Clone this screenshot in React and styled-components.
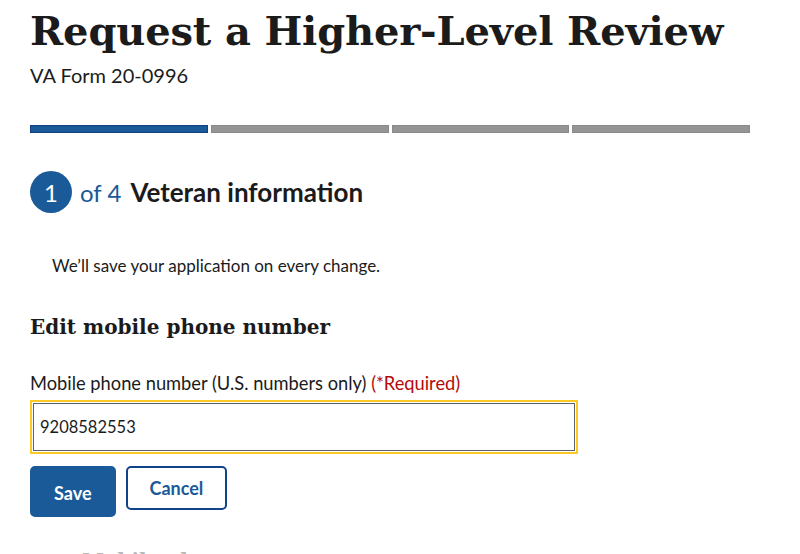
import React from "react";
import styled, { createGlobalStyle } from "styled-components";

const GlobalStyle = createGlobalStyle`
  body {
    margin: 0;
    background: #ffffff;
    font-family: "Lato", "Noto Sans", sans-serif;
    color: #1b1b1b;
  }
`;

const Page = styled.div`
  width: 720px;
  padding: 0 30px;
  height: 554px;
  overflow: hidden;
`;

const Title = styled.h1`
  margin: 0;
  padding-top: 6px;
  font-family: "DejaVu Serif", serif;
  font-weight: 700;
  font-size: 40px;
  line-height: 50px;
  letter-spacing: -0.15px;
  color: #1b1b1b;
`;

const Subtitle = styled.div`
  margin-top: 6px;
  font-size: 20px;
  line-height: 26px;
`;

const Progress = styled.div`
  display: grid;
  grid-template-columns: repeat(4, 1fr);
  gap: 3px;
  margin-top: 37px;
`;

const Segment = styled.div`
  height: 8px;
  box-sizing: border-box;
  background: ${props => (props.active ? "#1a5a98" : "#949494")};
  border: 1px solid ${props => (props.active ? "#12407c" : "#8a8a8a")};
`;

const StepRow = styled.div`
  display: flex;
  align-items: center;
  margin-top: 38px;
  gap: 8px;
`;

const StepCircle = styled.div`
  width: 42px;
  height: 42px;
  border-radius: 50%;
  background: #1a5a98;
  color: #ffffff;
  display: flex;
  align-items: center;
  justify-content: center;
  font-size: 24px;
`;

const StepOf = styled.span`
  font-size: 24px;
  color: #1a5a98;
`;

const StepTitle = styled.span`
  font-size: 26px;
  font-weight: 700;
  margin-left: 1px;
`;

const SaveNote = styled.p`
  margin: 42px 0 0 22px;
  font-size: 17px;
  line-height: 22px;
`;

const SectionHeading = styled.h3`
  margin: 36px 0 0;
  font-family: "DejaVu Serif", serif;
  font-weight: 700;
  font-size: 20px;
  line-height: 28px;
`;

const Label = styled.label`
  display: block;
  margin-top: 30px;
  font-size: 18.3px;
  line-height: 24px;
`;

const Required = styled.span`
  color: #b50909;
`;

const FocusRing = styled.div`
  margin-top: 5px;
  width: 548px;
  box-sizing: border-box;
  border: 2px solid #fac922;
  padding: 1px;
`;

const Input = styled.input`
  display: block;
  width: 100%;
  height: 48px;
  box-sizing: border-box;
  border: 1px solid #5b616b;
  padding: 0 6px;
  font-family: "Lato", "Noto Sans", sans-serif;
  font-size: 16.5px;
  color: #1b1b1b;
  outline: none;
`;

const Buttons = styled.div`
  display: flex;
  align-items: flex-start;
  gap: 10px;
  margin-top: 12px;
`;

const Button = styled.button`
  box-sizing: border-box;
  height: ${props => (props.primary ? "51px" : "44px")};
  padding: ${props => (props.primary ? "2px 22px 0" : "0 22px")};
  border-radius: 5px;
  font-family: "Lato", "Noto Sans", sans-serif;
  font-weight: 700;
  font-size: 18px;
  background: ${props => (props.primary ? "#1a5a98" : "#ffffff")};
  color: ${props => (props.primary ? "#ffffff" : "#1a5a98")};
  border: 2px solid ${props => (props.primary ? "#1a5a98" : "#11438a")};
`;

const NextHeading = styled.div`
  margin: 32px 0 0 52px;
  font-family: "DejaVu Serif", serif;
  font-weight: 700;
  font-size: 20px;
  color: #b8b8b8;
`;

export default function App() {
  return (
    <Page>
      <GlobalStyle />
      <Title>Request a Higher-Level Review</Title>
      <Subtitle>VA Form 20-0996</Subtitle>
      <Progress>
        <Segment active />
        <Segment />
        <Segment />
        <Segment />
      </Progress>
      <StepRow>
        <StepCircle>1</StepCircle>
        <StepOf>of 4</StepOf>
        <StepTitle>Veteran information</StepTitle>
      </StepRow>
      <SaveNote>We’ll save your application on every change.</SaveNote>
      <SectionHeading>Edit mobile phone number</SectionHeading>
      <Label>
        Mobile phone number (U.S. numbers only) <Required>(*Required)</Required>
      </Label>
      <FocusRing>
        <Input defaultValue="9208582553" />
      </FocusRing>
      <Buttons>
        <Button primary>Save</Button>
        <Button>Cancel</Button>
      </Buttons>
      <NextHeading>Mobile phone</NextHeading>
    </Page>
  );
}
